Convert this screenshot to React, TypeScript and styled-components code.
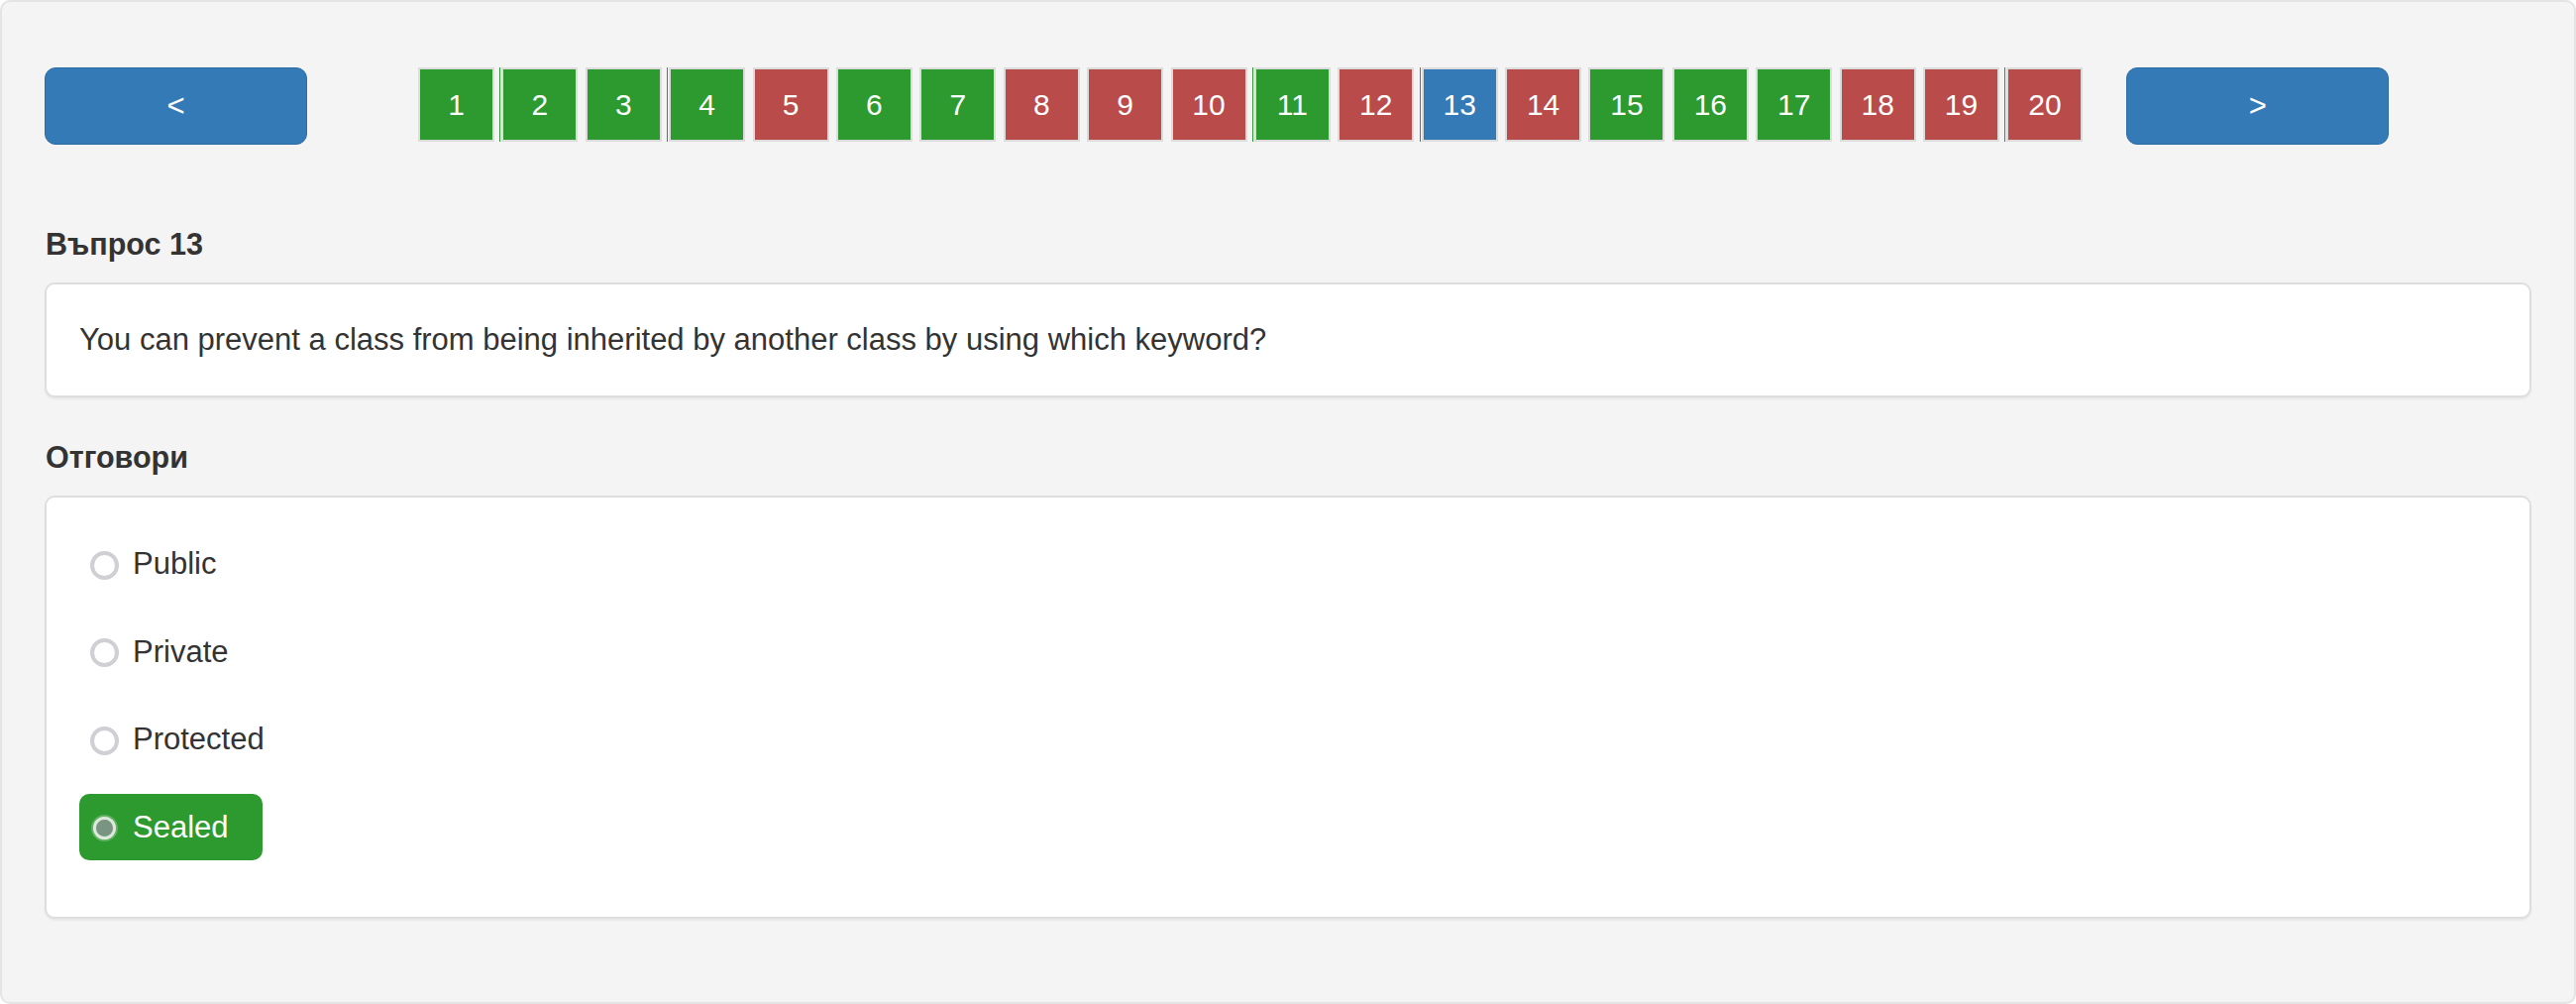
import React from "react";
import styled, { createGlobalStyle, css } from "styled-components";

const GlobalStyle = createGlobalStyle`
  html, body { margin: 0; padding: 0; }
  body {
    font-family: "Liberation Sans", Arial, sans-serif;
    color: #333;
    background: #fff;
  }
  * { box-sizing: border-box; }
`;

const Panel = styled.div`
  height: 100vh;
  background: #f4f4f4;
  border: 2px solid #e4e4e4;
  border-radius: 10px;
  padding: 66px 43px 0 43px;
`;

const Nav = styled.div`
  display: flex;
  align-items: flex-start;
`;

const ArrowButton = styled.button`
  width: 265px;
  height: 78px;
  background: #337ab7;
  border: 1px solid #2e6da4;
  border-radius: 11px;
  color: #fff;
  font-family: "Liberation Sans", Arial, sans-serif;
  font-size: 31px;
  display: flex;
  align-items: center;
  justify-content: center;
  padding: 0;
  cursor: pointer;
`;

const Squares = styled.div`
  display: flex;
  gap: 7.4px;
  margin: 0 44px 0 112px;
`;

type Status = "ok" | "bad" | "current";

const squareColors: Record<Status, string> = {
  ok: "#2c9a2e",
  bad: "#b94b4b",
  current: "#337ab7",
};

const Square = styled.div<{ $status: Status; $mark?: boolean }>`
  position: relative;
  width: 77px;
  height: 75px;
  border: 2px solid #dcdcdc;
  background: ${(p) => squareColors[p.$status]};
  color: #fff;
  font-size: 30px;
  display: flex;
  align-items: center;
  justify-content: center;
  ${(p) =>
    p.$mark &&
    css`
      &::before {
        content: "";
        position: absolute;
        left: -4px;
        top: -2px;
        bottom: -2px;
        width: 1px;
        background: ${squareColors[p.$status]};
      }
    `}
`;

const Heading = styled.h4<{ $top: number }>`
  margin: ${(p) => p.$top}px 0 21px 1px;
  font-size: 30.5px;
  font-weight: bold;
  line-height: 35px;
  color: #333;
`;

const Card = styled.div`
  background: #fff;
  border: 2px solid #dedede;
  border-radius: 10px;
  box-shadow: 0 2px 2px rgba(0, 0, 0, 0.05);
  padding: 33px;
`;

const QuestionText = styled.div`
  font-size: 31px;
  line-height: 46px;
  color: #333;
`;

const AnswerList = styled.div`
  display: flex;
  flex-direction: column;
  align-items: flex-start;
  gap: 21.5px;
  padding-bottom: 24px;
`;

const Answer = styled.label<{ $selected?: boolean }>`
  display: inline-flex;
  align-items: center;
  height: 67px;
  padding: 0 34px 0 11px;
  border-radius: 10px;
  font-size: 31px;
  line-height: 45px;
  color: ${(p) => (p.$selected ? "#fff" : "#333")};
  background: ${(p) => (p.$selected ? "#2c9a2e" : "transparent")};
  cursor: pointer;
`;

const Radio = styled.span<{ $selected?: boolean }>`
  width: 29px;
  height: 29px;
  margin: 3px 14px 0 0;
  border-radius: 50%;
  flex: none;
  ${(p) =>
    p.$selected
      ? css`
          background: #7a9482;
          border: 3px solid #dde6dd;
          background-clip: padding-box;
          outline: 3px solid rgba(255, 255, 255, 0.25);
          outline-offset: -1px;
          width: 23px;
          height: 23px;
          margin: 3px 17px 0 3px;
        `
      : css`
          background: #fff;
          border: 4px solid #cfcfd4;
        `}
`;

const squares: { n: number; s: Status; mark?: boolean }[] = [
  { n: 1, s: "ok" },
  { n: 2, s: "ok", mark: true },
  { n: 3, s: "ok" },
  { n: 4, s: "ok", mark: true },
  { n: 5, s: "bad" },
  { n: 6, s: "ok" },
  { n: 7, s: "ok" },
  { n: 8, s: "bad" },
  { n: 9, s: "bad" },
  { n: 10, s: "bad" },
  { n: 11, s: "ok", mark: true },
  { n: 12, s: "bad" },
  { n: 13, s: "current", mark: true },
  { n: 14, s: "bad" },
  { n: 15, s: "ok" },
  { n: 16, s: "ok" },
  { n: 17, s: "ok" },
  { n: 18, s: "bad" },
  { n: 19, s: "bad" },
  { n: 20, s: "bad", mark: true },
];

const answers = ["Public", "Private", "Protected", "Sealed"];

export default function App() {
  return (
    <>
      <GlobalStyle />
      <Panel>
        <Nav>
          <ArrowButton>&lt;</ArrowButton>
          <Squares>
            {squares.map((q) => (
              <Square key={q.n} $status={q.s} $mark={q.mark}>
                {q.n}
              </Square>
            ))}
          </Squares>
          <ArrowButton>&gt;</ArrowButton>
        </Nav>
        <Heading $top={83}>Въпрос 13</Heading>
        <Card>
          <QuestionText>
            You can prevent a class from being inherited by another class by using which keyword?
          </QuestionText>
        </Card>
        <Heading $top={43}>Отговори</Heading>
        <Card>
          <AnswerList>
            {answers.map((a) => {
              const sel = a === "Sealed";
              return (
                <Answer key={a} $selected={sel}>
                  <Radio $selected={sel} />
                  {a}
                </Answer>
              );
            })}
          </AnswerList>
        </Card>
      </Panel>
    </>
  );
}
